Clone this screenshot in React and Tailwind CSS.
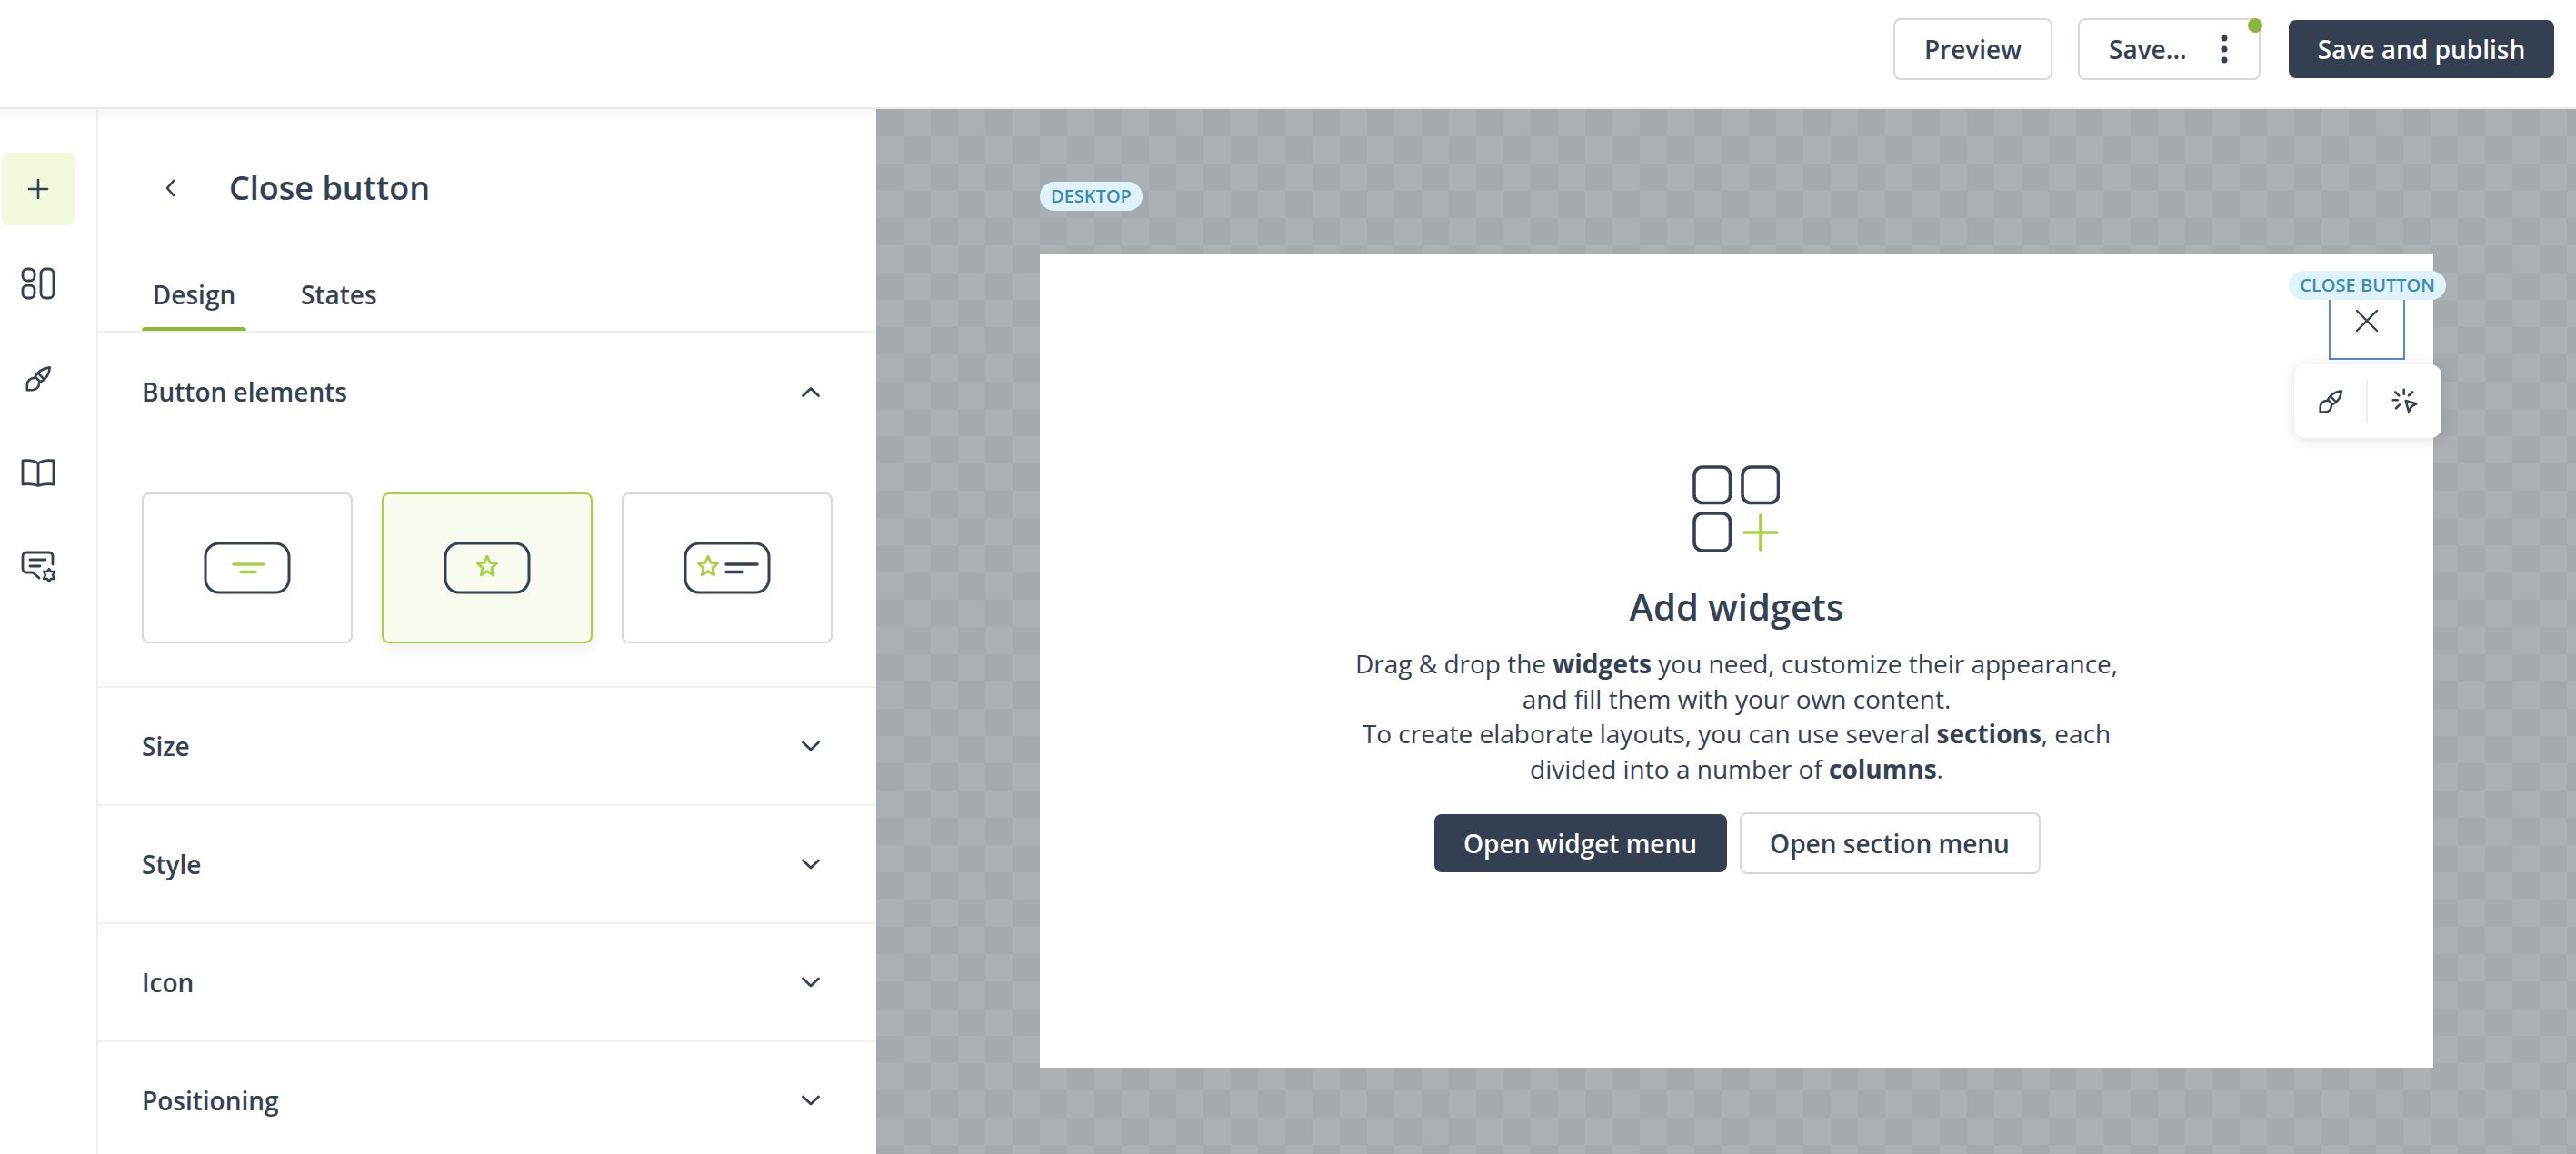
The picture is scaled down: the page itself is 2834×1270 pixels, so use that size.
import React from "react";

const lime = "#a6d242";

function Chevron({ up, className = "" }) {
  return (
    <svg width="24" height="24" viewBox="0 0 24 24" fill="none" stroke="#334155" strokeWidth="2.800" strokeLinecap="round" strokeLinejoin="round" className={className}>
      <path d={up ? "M3.500 16.500l8.500-8 8.500 8" : "M3.500 8l8.500 8 8.500-8"} />
    </svg>
  );
}

function Brush({ size = 32 }) {
  return (
    <svg width={size} height={size} viewBox="0 0 32 32" fill="none" stroke="#334155" strokeWidth="2.800" strokeLinecap="round" strokeLinejoin="round">
      <path d="M29.500 2.500C22.500 3.500 15.500 7.500 12.500 13.500L18.500 19.500C25.500 16.500 29.500 9.500 29.500 2.500z" />
      <path d="M16 9.500l6.500 6.500" />
      <path d="M12 15C7 14.500 3 18.500 3 23v6h6c5 0 8.500-3.500 8-8.500" />
    </svg>
  );
}

function ButtonGlyph({ star, lines, limeLines }) {
  return (
    <svg width="96" height="58" viewBox="0 0 96 58" fill="none" strokeLinecap="round" strokeLinejoin="round">
      <rect x="2" y="2" width="92" height="54" rx="15" stroke="#334155" strokeWidth="3" />
      {limeLines && (
        <g stroke={lime} strokeWidth="3.500">
          <path d="M33 25h33M41 33.500h16" />
        </g>
      )}
      {star && (
        <path
          transform={`translate(${lines ? 27 : 48} 28) scale(0.84)`}
          d="M0-14l3.800 8.500 8.700.8-6.500 6 1.900 9.200L0 5.700l-7.900 4.800 1.900-9.200-6.500-6 8.700-.8z"
          stroke={lime}
          strokeWidth="3.400"
        />
      )}
      {lines && (
        <g stroke="#334155" strokeWidth="3.500">
          <path d="M47 25h34M47 33.500h17" />
        </g>
      )}
    </svg>
  );
}

function Card({ active, children }) {
  return (
    <div
      className={
        "flex h-[166px] w-[232px] items-center justify-center rounded-lg border-2 " +
        (active ? "border-[#a6d242] bg-[#f8fcee] shadow-[0_8px_16px_rgba(0,0,0,0.06)]" : "border-[#d5d9de] bg-white")
      }
    >
      {children}
    </div>
  );
}

function Row({ label }) {
  return (
    <div className="flex h-[130px] shrink-0 items-center justify-between border-t-2 border-[#eef0f2] pl-[48px] pr-[60px]">
      <span className="text-[28px] font-semibold">{label}</span>
      <Chevron />
    </div>
  );
}

export default function App() {
  return (
    <div
      className="flex h-[1270px] w-[2834px] flex-col overflow-hidden bg-white text-[#334155]"
      style={{ fontFamily: '"Open Sans", "Noto Sans", sans-serif' }}
    >
      <header className="flex h-[120px] shrink-0 items-center justify-end border-b-2 border-[#e8eaec] bg-white pb-[10px] pr-[24px]">
        <button className="mr-[28px] h-[68px] w-[175px] rounded-lg border-2 border-[#d5d9de] text-[28px] font-semibold">Preview</button>
        <div className="relative mr-[31px] flex h-[68px] w-[201px] items-center justify-between rounded-lg border-2 border-[#d5d9de] pl-[32px] pr-[34px]">
          <span className="text-[28px] font-semibold">Save...</span>
          <svg width="8" height="32" viewBox="0 0 8 32" fill="#334155">
            <circle cx="4" cy="4" r="3.500" /><circle cx="4" cy="16" r="3.500" /><circle cx="4" cy="28" r="3.500" />
          </svg>
          <span className="absolute right-[-4px] top-[-2px] h-[16px] w-[16px] rounded-full bg-[#8db53a]" />
        </div>
        <button className="h-[64px] w-[292px] rounded-lg bg-[#344051] text-[28px] font-semibold text-white">Save and publish</button>
      </header>

      <div className="flex min-h-0 flex-1">
        <nav className="flex w-[108px] shrink-0 flex-col items-center border-r-2 border-[#eceef0] pt-[48px] shadow-[inset_0_14px_14px_-10px_rgba(0,0,0,0.05)]">
          <div className="ml-[-22px] flex h-[80px] w-[80px] items-center justify-center rounded-lg bg-[#f1f9dc]">
            <svg width="24" height="24" viewBox="0 0 24 24" fill="none" stroke="#334155" strokeWidth="2.600" strokeLinecap="round"><path d="M12 2v20M2 12h20" /></svg>
          </div>
          <div className="ml-[-22px] mt-[46px] flex h-[36px] items-center">
            <svg width="38" height="36" viewBox="0 0 38 36" fill="none" stroke="#334155" strokeWidth="2.800">
              <rect x="2" y="2" width="13" height="13" rx="5" /><rect x="2" y="20" width="13" height="14" rx="5" /><rect x="22" y="2" width="14" height="32" rx="5" />
            </svg>
          </div>
          <div className="ml-[-22px] mt-[72px]"><Brush size={30} /></div>
          <div className="ml-[-22px] mt-[72px]">
            <svg width="38" height="32" viewBox="0 0 38 32" fill="none" stroke="#334155" strokeWidth="2.800" strokeLinejoin="round">
              <path d="M19 6c-4-3-10-4-17-3v26c7-1 13 0 17 1.500C23 29 29 28 36 29V3c-7-1-13 0-17 3zM19 6v24" />
            </svg>
          </div>
          <div className="ml-[-20px] mt-[69px]">
            <svg width="40" height="38" viewBox="0 0 40 38" fill="none" stroke="#334155" strokeWidth="2.800" strokeLinecap="round" strokeLinejoin="round">
              <path d="M35 16V7a4 4 0 0 0-4-4H6a4 4 0 0 0-4 4v14a4 4 0 0 0 4 4h7l7 6" />
              <path d="M10 11h17M10 18h11" />
              <path d="M31 21l2 3h4l-2 4 2 4h-4l-2 3-2-3h-4l2-4-2-4h4z" strokeWidth="2.400" />
            </svg>
          </div>
        </nav>

        <aside className="flex w-[856px] shrink-0 flex-col bg-white shadow-[inset_0_14px_14px_-10px_rgba(0,0,0,0.05)]">
          <div className="flex h-[174px] shrink-0 items-center pl-[68px]">
            <svg width="24" height="24" viewBox="0 0 24 24" fill="none" stroke="#334155" strokeWidth="2.600" strokeLinecap="round" strokeLinejoin="round"><path d="M15 4l-7 8 7 8" /></svg>
            <h1 className="ml-[52px] text-[36px] font-semibold">Close button</h1>
          </div>
          <div className="flex h-[72px] shrink-0 items-start border-b-2 border-[#eef0f2] pl-[48px]">
            <div className="relative flex h-[70px] w-[115px] justify-center pt-[9px]">
              <span className="text-[28px] font-semibold">Design</span>
              <span className="absolute bottom-0 left-0 right-0 h-[4px] rounded-t bg-[#8db53a]" />
            </div>
            <span className="ml-[60px] pt-[9px] text-[28px] font-semibold">States</span>
          </div>
          <div className="flex h-[130px] shrink-0 items-center justify-between pl-[48px] pr-[60px]">
            <span className="text-[28px] font-semibold">Button elements</span>
            <Chevron up />
          </div>
          <div className="flex h-[259px] shrink-0 gap-[32px] pl-[48px] pt-[46px]">
            <Card><ButtonGlyph limeLines /></Card>
            <Card active><ButtonGlyph star /></Card>
            <Card><ButtonGlyph star lines /></Card>
          </div>
          <Row label="Size" />
          <Row label="Style" />
          <Row label="Icon" />
          <Row label="Positioning" />
        </aside>

        <main className="flex min-w-0 flex-1 flex-col bg-[#abb0b4] bg-[image:repeating-conic-gradient(#abb0b4_0_25%,#a5aaae_0_50%)] bg-[length:60px_60px] pl-[180px] pr-[157px] pt-[80px]">
          <div className="self-start rounded-full bg-[#e0f2fb] px-[12px] text-[20px] font-semibold uppercase leading-[32px] text-[#3b8ab3]">Desktop</div>
          <section className="relative mt-[48px] flex h-[895px] shrink-0 flex-col items-center bg-white pt-[232px]">
            <svg width="96" height="96" viewBox="0 0 96 96" fill="none" strokeWidth="3.600" strokeLinecap="round" className="-translate-x-px">
              <g stroke="#334155">
                <rect x="2" y="2" width="39.500" height="39.500" rx="9" /><rect x="55" y="2" width="39.500" height="39.500" rx="9" /><rect x="2" y="53" width="39.500" height="41" rx="9" />
              </g>
              <path d="M75 55v38M57 74h36" stroke={lime} />
            </svg>
            <h2 className="mt-[33px] text-[40px] font-semibold leading-[54px]">Add widgets</h2>
            <p className="mt-[16px] w-[900px] text-center text-[28px] leading-[38.700px]">
              Drag &amp; drop the <b className="font-bold">widgets</b> you need, customize their appearance,<br />
              and fill them with your own content.<br />
              To create elaborate layouts, you can use several <b className="font-bold">sections</b>, each<br />
              divided into a number of <b className="font-bold">columns</b>.
            </p>
            <div className="ml-[1px] mt-[28px] flex items-center gap-[14px]">
              <button className="h-[64px] w-[322px] rounded-lg bg-[#344051] text-[28px] font-semibold text-white">Open widget menu</button>
              <button className="h-[68px] w-[331px] rounded-lg border-2 border-[#d5d9de] text-[28px] font-semibold">Open section menu</button>
            </div>

            <div className="absolute right-[-14px] top-[18px] rounded-full bg-[#e0f2fb] px-[12px] text-[20px] font-semibold uppercase leading-[32px] text-[#3b8ab3]">Close button</div>
            <div className="absolute right-[31px] top-[50px] flex h-[66px] w-[84px] items-center justify-center border-2 border-t-0 border-[#5b86d8] pb-[18px]">
              <svg width="26" height="26" viewBox="0 0 26 26" fill="none" stroke="#334155" strokeWidth="2.400" strokeLinecap="round"><path d="M2 2l22 22M24 2L2 24" /></svg>
            </div>
            <div className="absolute right-[-9px] top-[121px] flex h-[81px] w-[162px] items-center rounded-xl bg-white shadow-[0_2px_16px_rgba(0,0,0,0.12)]">
              <div className="flex w-[79px] justify-center"><Brush size={28} /></div>
              <div className="h-[48px] w-[2px] bg-[#eceef0]" />
              <div className="flex flex-1 justify-center">
                <svg width="30" height="30" viewBox="0 0 30 30" fill="none" stroke="#334155" strokeWidth="2.600" strokeLinecap="round" strokeLinejoin="round">
                  <path d="M15.700 14l11.600 3.300-5.300 3-3 5.700z" />
                  <path d="M13.700 1.700v5M1.700 13.300h5M4.300 4.300l4 4M23.300 4.300L19 8.300M5 22.300l4-4" />
                </svg>
              </div>
            </div>
          </section>
        </main>
      </div>
    </div>
  );
}
